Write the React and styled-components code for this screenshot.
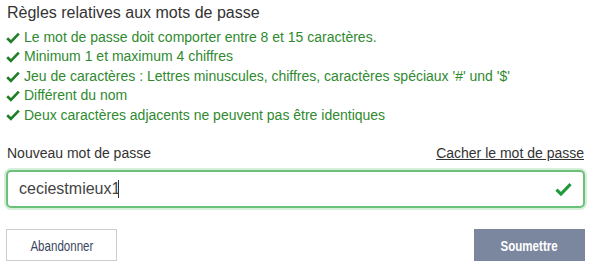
import React, { useState } from 'react';
import styled, { createGlobalStyle } from 'styled-components';

const GlobalStyle = createGlobalStyle`
  body {
    margin: 0;
    background: #ffffff;
    font-family: 'Liberation Sans', Arial, sans-serif;
  }
`;

const rules = [
  'Le mot de passe doit comporter entre 8 et 15 caractères.',
  'Minimum 1 et maximum 4 chiffres',
  "Jeu de caractères : Lettres minuscules, chiffres, caractères spéciaux '#' und '$'",
  'Différent du nom',
  'Deux caractères adjacents ne peuvent pas être identiques',
];

const Check = ({size = 14}) => (
  <svg width={size} height={size} viewBox={'0 0 14 14'} style={{display: 'block', flexShrink: 0}}>
    <path d={'M1.2 7.2l3.7 3.6 7.9-8.2'} fill={'none'} stroke={'currentColor'} strokeWidth={2.6} strokeLinecap={'butt'} strokeLinejoin={'miter'}/>
  </svg>
);

export const App = () => {
  const [hidden, setHidden] = useState(false);
  const [value, setValue] = useState('ceciestmieux1');
  return (
    <Page>
      <GlobalStyle/>
      <Title>Règles relatives aux mots de passe</Title>
      <RuleList>
        {rules.map(rule => (
          <Rule key={rule}>
            <RuleIcon><Check/></RuleIcon>
            {rule}
          </Rule>
        ))}
      </RuleList>
      <LabelRow>
        <Label htmlFor={'new-password'}>Nouveau mot de passe</Label>
        <ToggleLink onClick={() => setHidden(!hidden)}>
          {hidden ? 'Afficher le mot de passe' : 'Cacher le mot de passe'}
        </ToggleLink>
      </LabelRow>
      <Field>
        <Input id={'new-password'} type={hidden ? 'password' : 'text'} value={value} onChange={e => setValue(e.target.value)}/>
        <Caret/>
        <FieldIcon><Check size={17}/></FieldIcon>
      </Field>
      <Actions>
        <SecondaryButton><Narrow>Abandonner</Narrow></SecondaryButton>
        <PrimaryButton><Narrow>Soumettre</Narrow></PrimaryButton>
      </Actions>
    </Page>
  );
};

export default App;

const Page = styled.div`
  width: 579px;
  padding: 0 6px;
  color: #333333;
`;

const Title = styled.div`
  font-size: 16px;
  line-height: 20px;
  padding-top: 3px;
  padding-left: 1px;
  color: #333333;
`;

const RuleList = styled.ul`
  list-style: none;
  margin: 5px 0 0;
  padding: 0;
`;

const Rule = styled.li`
  display: flex;
  align-items: center;
  gap: 4px;
  font-size: 14px;
  line-height: 19.4px;
  color: #2f8a2f;
`;

const RuleIcon = styled.span`
  color: #1f7f27;
  display: flex;
`;

const LabelRow = styled.div`
  display: flex;
  justify-content: space-between;
  align-items: baseline;
  margin-top: 19px;
  font-size: 14px;
  line-height: 18px;
`;

const Label = styled.label`
  padding-left: 1px;
  color: #333333;
`;

const ToggleLink = styled.a`
  color: #333333;
  text-decoration: underline;
  cursor: pointer;
  margin-right: 1px;
`;

const Field = styled.div`
  position: relative;
  display: flex;
  align-items: center;
  margin-top: 8px;
  height: 38px;
  box-sizing: border-box;
  border: 2px solid #6cc17a;
  border-radius: 5px;
  box-shadow: 0 0 0 2px #d6efd9;
  background: #ffffff;
`;

const Input = styled.input`
  border: none;
  outline: none;
  background: transparent;
  font-family: 'Liberation Sans', Arial, sans-serif;
  font-size: 16px;
  color: #444444;
  padding: 0 0 0 11px;
  width: 100px;
  height: 100%;
  caret-color: transparent;
`;

const Caret = styled.span`
  width: 1px;
  height: 18px;
  background: #333333;
  margin-left: -1px;
`;

const FieldIcon = styled.span`
  position: absolute;
  right: 11px;
  top: 9px;
  color: #1f9a3a;
  display: flex;
`;

const Actions = styled.div`
  display: flex;
  justify-content: space-between;
  margin-top: 21px;
`;

const BaseButton = styled.button`
  height: 32px;
  width: 111px;
  box-sizing: border-box;
  display: flex;
  align-items: center;
  justify-content: center;
  font-family: 'Liberation Sans', Arial, sans-serif;
  font-size: 15px;
  cursor: pointer;
  padding: 0;
`;

const Narrow = styled.span`
  display: inline-block;
  transform: scaleX(0.77);
`;

const SecondaryButton = styled(BaseButton)`
  background: #ffffff;
  border: 1px solid #cccccc;
  color: #3a4560;
`;

const PrimaryButton = styled(BaseButton)`
  background: #7b879f;
  border: none;
  color: #ffffff;
  font-weight: 700;
`;
